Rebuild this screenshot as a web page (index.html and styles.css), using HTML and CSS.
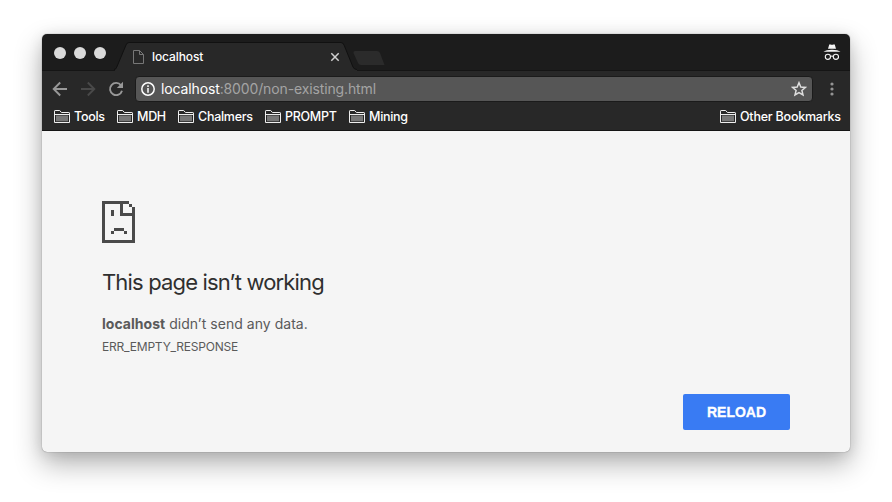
FILE: index.html
```html
<!DOCTYPE html>
<html lang="en">
<head>
<meta charset="utf-8">
<title>localhost</title>
<link rel="stylesheet" href="styles.css">
</head>
<body>
<svg class="defs" aria-hidden="true">
  <symbol id="folder" viewBox="0 0 16 13">
    <path class="folder-fill" d="M2 5.5H14V11.2H2Z"/>
    <path class="folder-line" d="M.5 12V1.1Q.5.5 1.1.5H5.7L7.4 2.5H14.9Q15.5 2.5 15.5 3.1V12.5H.5ZM.5 4.5H15.5"/>
  </symbol>
</svg>
<div class="window">
  <header class="titlebar">
    <div class="lights"><i></i><i></i><i></i></div>
    <div class="tab">
      <svg class="tab-shape" width="242" height="29" viewBox="0 0 242 29"><path class="tab-fill" d="M0 29V27.5Q1 27 1.8 25L11 3Q12 .5 14 .5H226Q228 .5 229 3L238 25Q239 27.5 242 27.5V29Z"/><path class="tab-line" d="M-1 27.5Q1 27.5 1.8 25L11 3Q12 .5 14 .5H226Q228 .5 229 3L238 25Q239 27.5 242 27.5"/></svg>
      <svg class="page-icon" width="11" height="14" viewBox="0 0 11 14"><path d="M.5.5H6.5L10.5 4.5V13.5H.5ZM6.5.5V4.5H10.5"/></svg>
      <span class="tab-title">localhost</span>
      <svg class="close" width="10" height="10" viewBox="0 0 10 10"><path d="M1.3 1.3L8.7 8.7M8.7 1.3L1.3 8.7"/></svg>
    </div>
    <svg class="new-tab" width="32" height="14" viewBox="0 0 32 14"><path d="M2 0H24Q26 0 27 2L31.5 14H8Q6 14 5 12L.5 2Q0 0 2 0Z"/></svg>
    <svg class="incognito" width="18" height="18" viewBox="0 0 18 18"><path class="solid" d="M5 4.8L6.2.7Q6.6 0 7.4.4Q9 1.2 10.6.4Q11.4 0 11.8.7L13 4.8ZM.5 7.8Q3 5.8 9 5.8T17.5 7.8Z"/><circle cx="4.9" cy="12.8" r="2.6"/><circle cx="12.9" cy="12.8" r="2.6"/><path d="M7.3 12.4Q9 11.6 10.5 12.4"/></svg>
  </header>
  <div class="toolbar">
    <svg class="nav back" width="16" height="16" viewBox="0 0 16 16"><path d="M15 8H2M8.2 1.5L1.7 8L8.2 14.5"/></svg>
    <svg class="nav forward" width="16" height="16" viewBox="0 0 16 16"><path d="M1 8H14M7.8 1.5L14.3 8L7.8 14.5"/></svg>
    <svg class="nav reload-icon" width="16" height="16" viewBox="0 0 16 16"><path d="M13 4.3A6.1 6.1 0 1 0 14 9.7"/><path class="arrow" d="M15 .8V7H8.8Z"/></svg>
    <div class="omnibox">
      <svg class="info" width="14" height="14" viewBox="0 0 14 14"><circle cx="7" cy="7" r="6.2"/><path d="M7 6V10.7M7 3.2V4.9"/></svg>
      <span class="url"><b>localhost</b>:8000/non-existing.html</span>
      <svg class="star" width="16" height="16" viewBox="0 0 16 16"><path d="M8 1.7L9.8 6L14.4 6.4L10.9 9.4L12 13.9L8 11.5L4 13.9L5.1 9.4L1.6 6.4L6.2 6Z"/></svg>
    </div>
    <svg class="menu" width="4" height="14" viewBox="0 0 4 14"><circle cx="2" cy="2" r="1.6"/><circle cx="2" cy="7" r="1.6"/><circle cx="2" cy="12" r="1.6"/></svg>
  </div>
  <nav class="bookmarks">
    <span class="bookmark w-tools"><svg width="16" height="13"><use href="#folder"/></svg><span>Tools</span></span>
    <span class="bookmark w-mdh"><svg width="16" height="13"><use href="#folder"/></svg><span>MDH</span></span>
    <span class="bookmark w-chalmers"><svg width="16" height="13"><use href="#folder"/></svg><span>Chalmers</span></span>
    <span class="bookmark w-prompt"><svg width="16" height="13"><use href="#folder"/></svg><span>PROMPT</span></span>
    <span class="bookmark w-mining"><svg width="16" height="13"><use href="#folder"/></svg><span>Mining</span></span>
    <span class="bookmark other"><svg width="16" height="13"><use href="#folder"/></svg><span>Other Bookmarks</span></span>
  </nav>
  <main class="page">
    <svg class="sad" width="33" height="42" viewBox="0 0 33 42" shape-rendering="crispEdges"><path d="M0 0H27V3H3V39H30V15H18V3H21V12H30V6H33V42H0ZM27 3H30V6H27ZM9 9H12V15H9ZM12 27H22V30H12ZM9 30H12V33H9ZM22 30H25V33H22Z"/></svg>
    <h1>This page isn’t working</h1>
    <p class="message"><strong>localhost</strong> didn’t send any data.</p>
    <p class="code">ERR_EMPTY_RESPONSE</p>
    <button class="reload">RELOAD</button>
  </main>
</div>
</body>
</html>
```
FILE: styles.css
```css
* { box-sizing: border-box; }
body {
  margin: 0;
  height: 502px;
  padding: 34px 42px 50px;
  overflow: hidden;
  background: #fff;
  font-family: Inter, "Liberation Sans", sans-serif;
}
svg { display: block; flex: none; fill: none; }
.defs { position: absolute; width: 0; height: 0; }
.window {
  width: 808px;
  height: 418px;
  border-radius: 5px;
  overflow: hidden;
  background: #f5f5f5;
  box-shadow: 0 0 1px rgba(0,0,0,.6), 0 12px 28px rgba(0,0,0,.3), 0 2px 14px rgba(0,0,0,.1);
}
.titlebar {
  height: 37px;
  display: flex;
  align-items: flex-start;
  background: #1c1c1c;
  box-shadow: inset 0 -1px #151515;
}
.lights { display: flex; gap: 8px; padding: 13px 0 0 12px; width: 73px; }
.lights i { width: 12px; height: 12px; border-radius: 50%; background: #dadada; }
.tab {
  position: relative;
  display: flex;
  align-items: center;
  width: 242px;
  height: 29px;
  margin-top: 8px;
  padding: 0 17px 0 18px;
}
.tab-shape { position: absolute; left: 0; top: 0; overflow: visible; }
.tab-fill { fill: #282828; }
.tab-line { stroke: #111; }
.page-icon { position: relative; stroke: #777; }
.tab-title { position: relative; margin-left: 8px; flex: 1; color: #fff; font-size: 12px; font-weight: 500; letter-spacing: -.1px; }
.close { position: relative; stroke: #d0d0d0; stroke-width: 1.5; }
.new-tab { margin: 17px 0 0 -4px; fill: #2b2b2b; }
.incognito { margin: 10px 9px 0 auto; stroke: #f4f4f4; stroke-width: 1.1; }
.incognito .solid { fill: #f4f4f4; stroke: none; }
.toolbar {
  height: 34px;
  display: flex;
  align-items: center;
  padding: 2px 16px 0 10px;
  background: #282828;
}
.nav { stroke: #989898; stroke-width: 1.9; }
.forward { margin-left: 12px; stroke: #494949; }
.reload-icon { margin-left: 12px; }
.reload-icon .arrow { fill: #989898; stroke: none; }
.omnibox {
  width: 678px;
  height: 26px;
  margin-left: 11px;
  padding: 0 5px;
  display: flex;
  align-items: center;
  border: 1px solid #1b1b1b;
  border-radius: 4px;
  background: #565656;
}
.info { stroke: #fff; stroke-width: 1.5; }
.url { position: relative; top: -1px; margin-left: 6px; flex: 1; font-size: 14px; letter-spacing: -.13px; color: #a4a4a4; }
.url b { color: #fff; font-weight: 400; }
.star { stroke: #dedede; stroke-width: 1.5; }
.menu { margin-left: auto; fill: #949494; }
.bookmarks {
  height: 26px;
  display: flex;
  padding: 0 9px 0 12px;
  background: #282828;
  border-bottom: 1px solid #151515;
  color: #fff;
  font-size: 12.5px;
  font-weight: 500;
}
.bookmark { display: flex; align-items: center; gap: 4px; height: 23px; white-space: nowrap; letter-spacing: -.28px; }
.folder-fill { fill: #777; }
.folder-line { stroke: #eee; }
.w-tools { width: 63px; }
.w-mdh { width: 61px; }
.w-chalmers { width: 87px; }
.w-prompt { width: 84px; }
.other { width: 121px; margin-left: auto; letter-spacing: -.22px; }
.page { display: flex; flex-direction: column; height: 321px; padding: 70px 60px 22px; }
.sad { fill: #4a4a4a; }
h1 { margin: 25px 0 0; font-size: 22px; line-height: 28px; font-weight: 400; letter-spacing: -.84px; color: #2f2f2f; }
p { margin: 0; color: #5a5a5a; }
.message { margin-top: 18px; font-size: 14px; line-height: 20px; letter-spacing: .03px; }
.code { margin-top: 4px; font-size: 12px; line-height: 18px; letter-spacing: -.2px; }
.reload {
  width: 107px;
  height: 36px;
  margin: auto 0 0 auto;
  padding: 0;
  border: 0;
  border-radius: 2px;
  background: #397bf3;
  color: #fff;
  font: 700 14px "Liberation Sans", sans-serif;
  -webkit-text-stroke: .3px #fff;
}
```
